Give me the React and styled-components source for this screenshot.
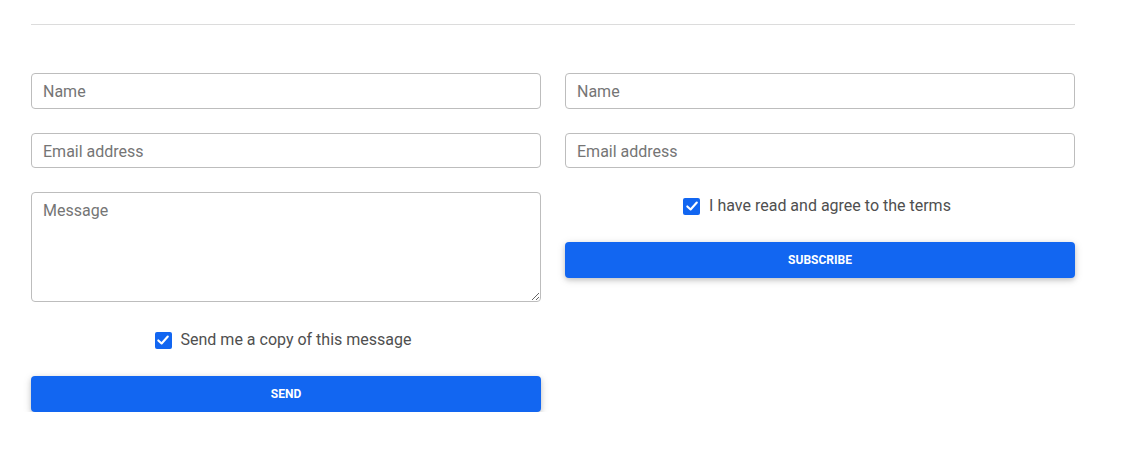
import React from "react";
import styled, { createGlobalStyle } from "styled-components";

const Global = createGlobalStyle`
  html, body { margin: 0; padding: 0; background: #fff; }
  body { font-family: Roboto, "Liberation Sans", sans-serif; color: #4f4f4f; }
  * { box-sizing: border-box; }
`;

const Page = styled.div`
  width: 1044px;
  margin-left: 31px;
  padding-top: 24px;
`;

const Rule = styled.hr`
  margin: 0 0 48px 0;
  border: 0;
  border-top: 1px solid #dcdcdc;
`;

const Columns = styled.div`
  display: grid;
  grid-template-columns: 510px 510px;
  column-gap: 24px;
  align-items: start;
`;

const Form = styled.form`
  display: flex;
  flex-direction: column;
  gap: 24px;
`;

const Input = styled.input`
  display: block;
  width: 100%;
  height: 35.6px;
  padding: 2px 11px 0;
  font-family: Roboto, "Liberation Sans", sans-serif;
  font-size: 16px;
  color: #4f4f4f;
  border: 1px solid #bdbdbd;
  border-radius: 4px;
  outline: none;
  background: #fff;
  &::placeholder { color: #757575; }
`;

const TextArea = styled.textarea`
  display: block;
  width: 100%;
  height: 110px;
  padding: 5px 11px;
  font-family: Roboto, "Liberation Sans", sans-serif;
  font-size: 16px;
  line-height: 1.6;
  color: #4f4f4f;
  border: 1px solid #bdbdbd;
  border-radius: 4px;
  outline: none;
  resize: vertical;
  margin: 0;
  &::placeholder { color: #757575; }
`;

const CheckRow = styled.label`
  display: flex;
  justify-content: center;
  align-items: center;
  gap: 9px;
  height: 25.6px;
  padding: 2px 6px 0 0;
  font-size: 16px;
  color: #4f4f4f;
  cursor: pointer;
`;

const Box = styled.span`
  width: 17px;
  height: 17px;
  margin-top: 1px;
  border-radius: 2px;
  background: #1266f1;
  display: inline-flex;
  align-items: center;
  justify-content: center;
  flex: none;
`;

const Button = styled.button`
  width: 100%;
  height: 36px;
  border: 0;
  border-radius: 4px;
  background: #1266f1;
  color: #fff;
  font-family: Roboto, "Liberation Sans", sans-serif;
  font-size: 12px;
  font-weight: 700;
  text-transform: uppercase;
  letter-spacing: 0;
  box-shadow: 0 2px 5px 0 rgba(0,0,0,0.16), 0 2px 10px 0 rgba(0,0,0,0.12);
  cursor: pointer;
`;

const Check = ({ children }) => (
  <CheckRow>
    <Box>
      <svg width="14" height="14" viewBox="0 0 14 14">
        <path d="M2.3 7.4 L5.6 10.5 L11.8 3.5" fill="none" stroke="#fff" strokeWidth="2.1" strokeLinecap="round" strokeLinejoin="round" />
      </svg>
    </Box>
    {children}
  </CheckRow>
);

export default function App() {
  return (
    <Page>
      <Global />
      <Rule />
      <Columns>
        <Form onSubmit={(e) => e.preventDefault()}>
          <Input placeholder="Name" />
          <Input placeholder="Email address" />
          <TextArea placeholder="Message" />
          <Check>Send me a copy of this message</Check>
          <Button type="submit">Send</Button>
        </Form>
        <Form onSubmit={(e) => e.preventDefault()}>
          <Input placeholder="Name" />
          <Input placeholder="Email address" />
          <Check>I have read and agree to the terms</Check>
          <Button type="submit">Subscribe</Button>
        </Form>
      </Columns>
    </Page>
  );
}
